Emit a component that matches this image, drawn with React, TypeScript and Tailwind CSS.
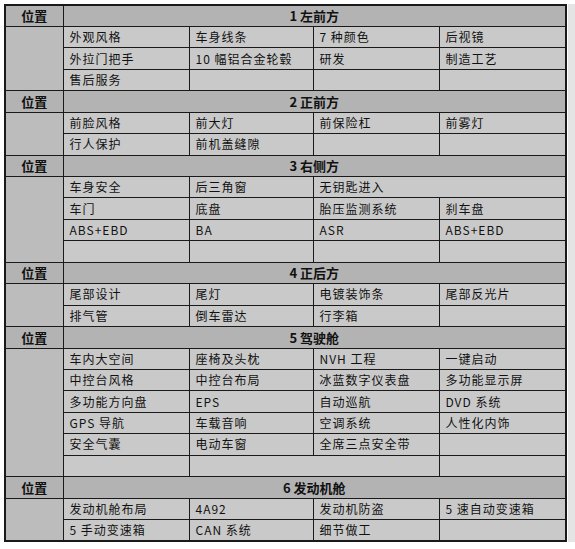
type Cell = { text: string; span?: number }

type Section = {
  title: string
  rows: Cell[][]
}

const sections: Section[] = [
  {
    title: "1 左前方",
    rows: [
      [{ text: "外观风格" }, { text: "车身线条" }, { text: "7 种颜色" }, { text: "后视镜" }],
      [{ text: "外拉门把手" }, { text: "10 幅铝合金轮毂" }, { text: "研发" }, { text: "制造工艺" }],
      [{ text: "售后服务" }, { text: "" }, { text: "" }, { text: "" }],
    ],
  },
  {
    title: "2 正前方",
    rows: [
      [{ text: "前脸风格" }, { text: "前大灯" }, { text: "前保险杠" }, { text: "前雾灯" }],
      [{ text: "行人保护" }, { text: "前机盖缝隙" }, { text: "" }, { text: "" }],
    ],
  },
  {
    title: "3 右侧方",
    rows: [
      [{ text: "车身安全" }, { text: "后三角窗" }, { text: "无钥匙进入", span: 2 }],
      [{ text: "车门" }, { text: "底盘" }, { text: "胎压监测系统" }, { text: "刹车盘" }],
      [{ text: "ABS+EBD" }, { text: "BA" }, { text: "ASR" }, { text: "ABS+EBD" }],
      [{ text: "" }, { text: "" }, { text: "" }, { text: "" }],
    ],
  },
  {
    title: "4 正后方",
    rows: [
      [{ text: "尾部设计" }, { text: "尾灯" }, { text: "电镀装饰条" }, { text: "尾部反光片" }],
      [{ text: "排气管" }, { text: "倒车雷达" }, { text: "行李箱" }, { text: "" }],
    ],
  },
  {
    title: "5 驾驶舱",
    rows: [
      [{ text: "车内大空间" }, { text: "座椅及头枕" }, { text: "NVH 工程" }, { text: "一键启动" }],
      [{ text: "中控台风格" }, { text: "中控台布局" }, { text: "冰蓝数字仪表盘" }, { text: "多功能显示屏" }],
      [{ text: "多功能方向盘" }, { text: "EPS" }, { text: "自动巡航" }, { text: "DVD 系统" }],
      [{ text: "GPS 导航" }, { text: "车载音响" }, { text: "空调系统" }, { text: "人性化内饰" }],
      [{ text: "安全气囊" }, { text: "电动车窗" }, { text: "全席三点安全带" }, { text: "" }],
      [{ text: "" }, { text: "", span: 2 }, { text: "" }],
    ],
  },
  {
    title: "6 发动机舱",
    rows: [
      [{ text: "发动机舱布局" }, { text: "4A92" }, { text: "发动机防盗" }, { text: "5 速自动变速箱" }],
      [{ text: "5 手动变速箱" }, { text: "CAN 系统" }, { text: "细节做工" }, { text: "" }],
    ],
  },
]

export default function App() {
  return (
    <div
      className="min-h-[549px] w-[575px] bg-white pt-[4px] pl-[4px]"
      style={{ fontFamily: "'Noto Sans CJK SC', 'Liberation Sans', sans-serif" }}
    >
      <div className="flex">
        <table className="w-[561px] table-fixed border-collapse border-2 border-[#1a1a1a] text-[12px] text-[#111]">
          <colgroup>
            <col className="w-[58px]" />
            <col className="w-[126px]" />
            <col className="w-[124px]" />
            <col className="w-[126px]" />
            <col className="w-[127px]" />
          </colgroup>
          <tbody>
            {sections.map((s) => (
              <SectionRows key={s.title} section={s} />
            ))}
          </tbody>
        </table>
        {/* faint shadow strip on the right edge */}
        <div className="ml-[1px] w-[9px] bg-[#e4e4e4]" />
      </div>
    </div>
  )
}

function SectionRows({ section }: { section: Section }) {
  return (
    <>
      <tr className="h-[21.44px] bg-[#b3b3b3]">
        <td className="border border-[#1a1a1a] p-0 text-center text-[13px] font-bold leading-none">位置</td>
        <td colSpan={4} className="border border-[#1a1a1a] p-0 text-center text-[13px] font-bold leading-none">
          {section.title}
        </td>
      </tr>
      {section.rows.map((row, i) => (
        <tr key={i} className="h-[21.44px]">
          {i === 0 && (
            <td rowSpan={section.rows.length} className="border border-[#1a1a1a] bg-[#bcbcbc] p-0" />
          )}
          {row.map((c, j) => (
            <td
              key={j}
              colSpan={c.span}
              className="border border-[#1a1a1a] bg-[#c9c9c9] py-0 pl-[6px] tracking-[1px] leading-none whitespace-nowrap"
            >
              {c.text}
            </td>
          ))}
        </tr>
      ))}
    </>
  )
}
